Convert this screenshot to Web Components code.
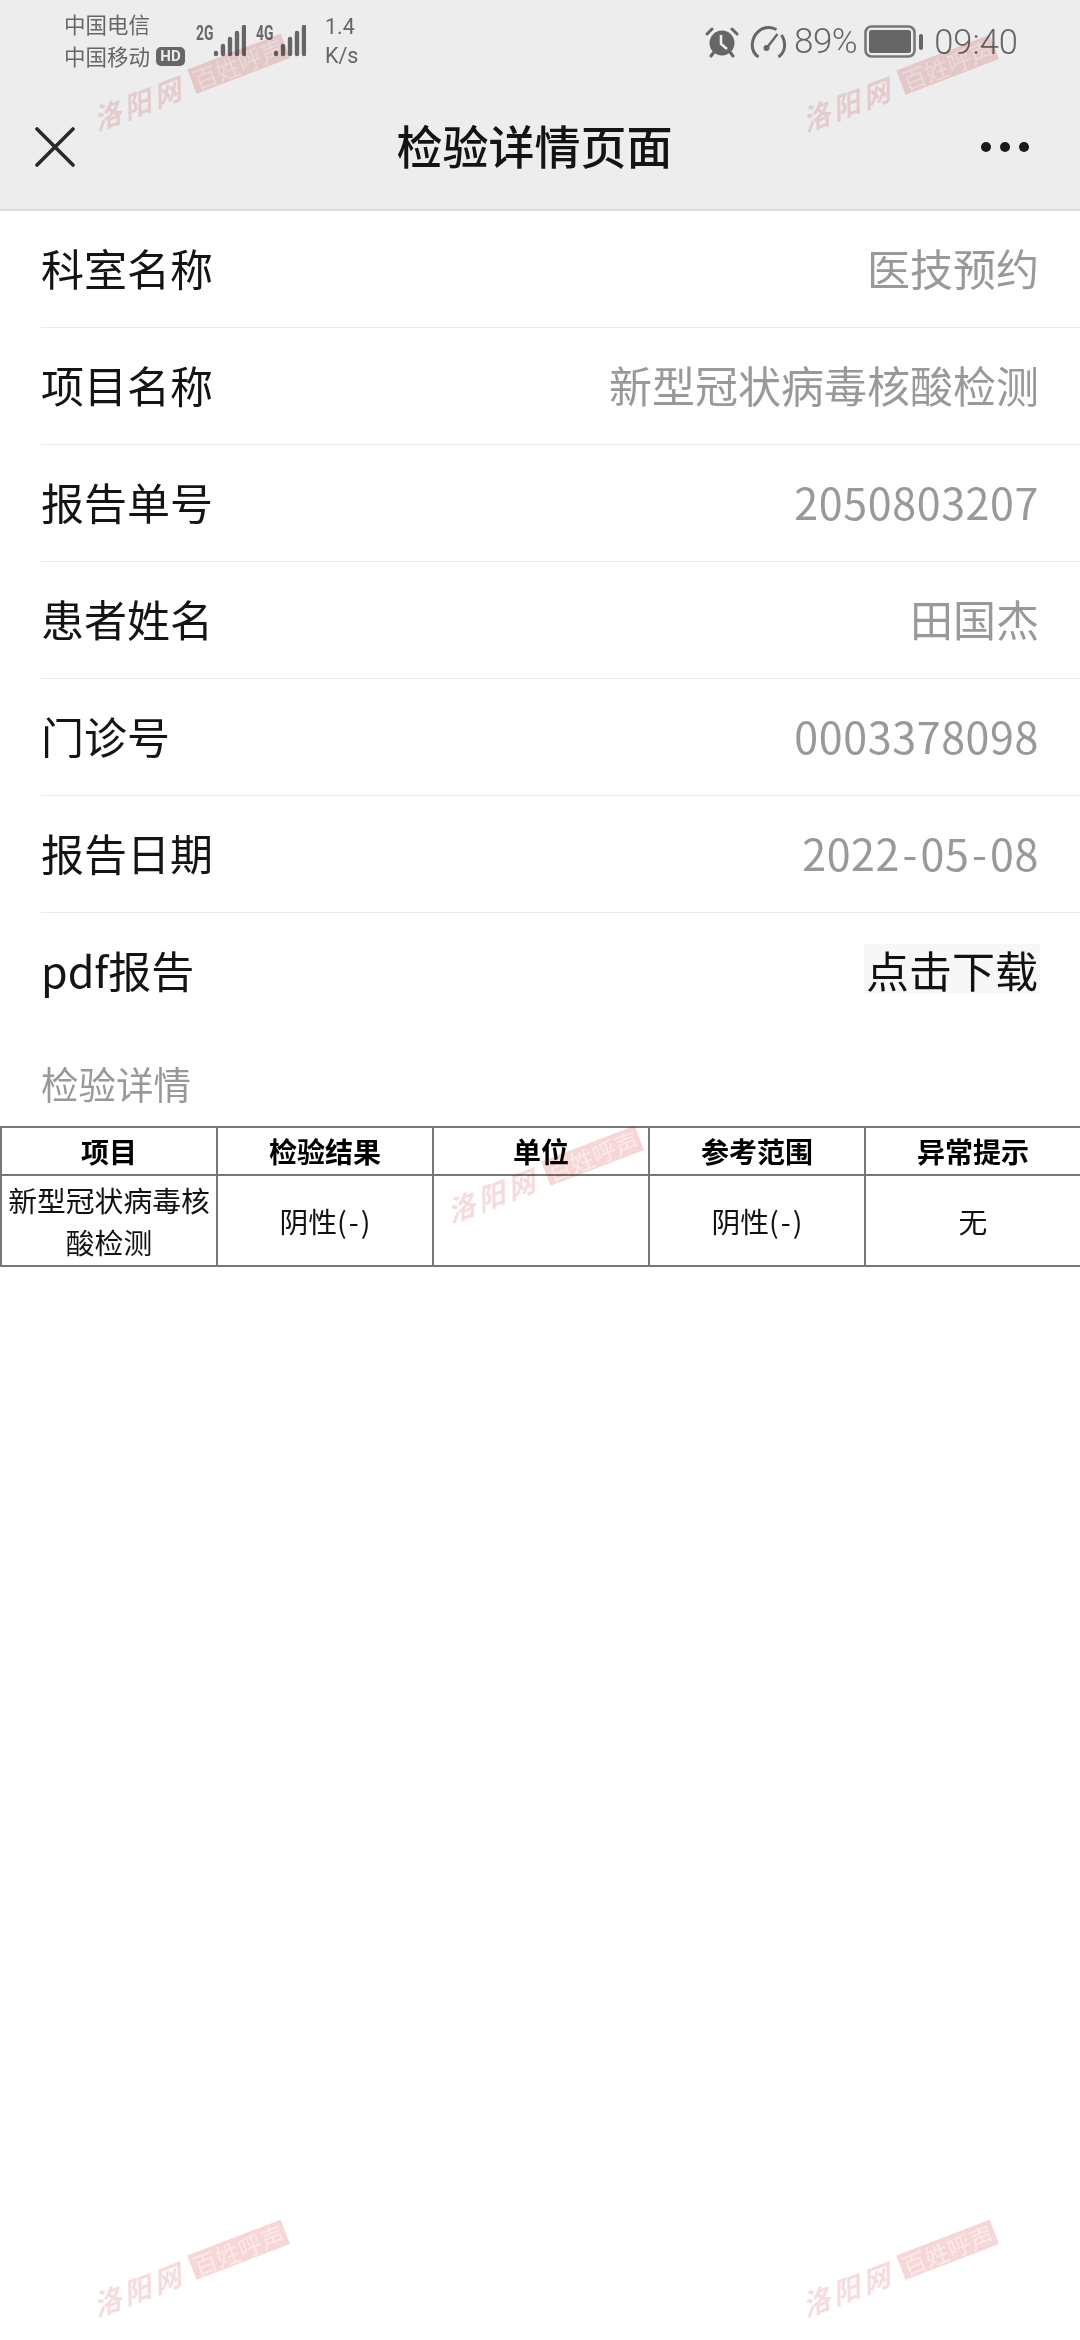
<!DOCTYPE html>
<html lang="zh-CN">
<head>
<meta charset="utf-8">
<title>检验详情页面</title>
<style>
  html, body {
    margin: 0;
    background: #fff;
    font-family: "Noto Sans CJK SC", "Noto Sans", sans-serif;
  }
</style>
</head>
<body>
<report-page>
  <status-bar></status-bar>
  <nav-bar>检验详情页面</nav-bar>
  <info-row label="科室名称">医技预约</info-row>
  <info-row label="项目名称">新型冠状病毒核酸检测</info-row>
  <info-row label="报告单号" digits>2050803207</info-row>
  <info-row label="患者姓名">田国杰</info-row>
  <info-row label="门诊号" digits>0003378098</info-row>
  <info-row label="报告日期" digits>2022<span style="margin:0 2.500px">-</span>05<span style="margin:0 2.500px">-</span>08</info-row>
  <info-row label="pdf报告" link last>点击下载</info-row>
  <section-title>检验详情</section-title>
  <result-table></result-table>
  <water-mark x="191" y="82"></water-mark>
  <water-mark x="900" y="83"></water-mark>
  <water-mark x="545" y="1174"></water-mark>
  <water-mark x="191" y="2268"></water-mark>
  <water-mark x="900" y="2268"></water-mark>
</report-page>

<script>
class ReportPage extends HTMLElement {
  constructor() {
    super();
    this.attachShadow({ mode: "open" });
    this.shadowRoot.innerHTML = `
      <style>
        :host {
          display: block;
          position: relative;
          width: 1080px;
          height: 2340px;
          overflow: hidden;
          background: #fff;
        }
      </style>
      <slot></slot>
    `;
  }
}

class StatusBar extends HTMLElement {
  constructor() {
    super();
    this.attachShadow({ mode: "open" });

    // Signal bars, the first one is only a dot
    const bars = `
      <svg width="33" height="32" viewBox="0 0 33 32" fill="none" stroke="#666" stroke-width="4.4" stroke-linecap="round">
        <path d="M3 28v1M10 21v8M17 14v15M24 8v21M31 2v27"/>
      </svg>`;

    this.shadowRoot.innerHTML = `
      <style>
        :host {
          display: flex;
          align-items: flex-start;
          box-sizing: border-box;
          height: 84px;
          padding: 8px 0 0 64px;
          background: #ededed;
          color: #666;
          font-family: "Noto Sans CJK SC", sans-serif;
        }
        .carriers {
          display: flex;
          flex-direction: column;
          width: 132px;
          font-size: 21.500px;
          line-height: 32px;
        }
        .line {
          display: flex;
          align-items: center;
          gap: 6px;
          white-space: nowrap;
        }
        .hd {
          width: 29px;
          height: 19px;
          border-radius: 5px;
          background: #666;
          color: #ededed;
          font: 700 15px/19px "Roboto", sans-serif;
          text-align: center;
        }
        .signal {
          display: flex;
          align-items: flex-start;
          margin-top: 17px;
        }
        .signal + .signal { margin-left: 10px; }
        .net {
          display: inline-block;
          width: 18px;
          margin-top: -1px;
          font: 700 21px/19px "Roboto", sans-serif;
          transform: scaleX(.66);
          transform-origin: left top;
        }
        .signal svg { margin-left: -1px; }
        .speed {
          width: 50px;
          margin: 4px 0 0 19px;
          font: 21.500px/29px "Roboto", sans-serif;
        }
        .right {
          display: flex;
          align-items: center;
          height: 36px;
          margin: 16px 0 0 auto;
          padding-right: 62px;
        }
        .pct {
          margin: 0 7px 0 7px;
          font: 300 35px/36px "Roboto", sans-serif;
          letter-spacing: -.5px;
        }
        .time {
          margin-left: 10px;
          font: 300 34.500px/36px "Roboto", sans-serif;
        }
        svg { display: block; flex: none; }
      </style>
      <div class="carriers">
        <div class="line">中国电信</div>
        <div class="line">中国移动<span class="hd">HD</span></div>
      </div>
      <div class="signal"><span class="net">2G</span>${bars}</div>
      <div class="signal"><span class="net">4G</span>${bars}</div>
      <div class="speed"><div>1.4</div><div>K/s</div></div>
      <div class="right">
        <svg width="34" height="34" viewBox="0 0 34 34">
          <circle cx="17" cy="18" r="12.5" fill="#666"/>
          <path d="M2 9l5-5M32 9l-5-5M6 31l3-4M28 31l-3-4" stroke="#666" stroke-width="3" stroke-linecap="round"/>
          <path d="M16 10v9l6 5" fill="none" stroke="#ededed" stroke-width="2.6"/>
        </svg>
        <svg width="37" height="34" viewBox="0 0 36 34" fill="none" stroke="#666" stroke-width="3" style="margin-left:11px">
          <path d="M8 32C2 28 1 21 2.500 15C5 7 12 2 19 2.500C22 2.700 24 3.500 26 4.500"/>
          <path d="M31 10C36 18 35 27 28 32"/>
          <path d="M17 22L27 9" stroke-width="2.400"/>
          <circle cx="16" cy="23" r="3" fill="#666" stroke="none"/>
        </svg>
        <span class="pct">89%</span>
        <svg width="60" height="34" viewBox="0 0 60 34">
          <rect x="1.500" y="1.500" width="49" height="30" rx="6" fill="none" stroke="#777" stroke-width="2.600"/>
          <rect x="5" y="5" width="42" height="23" rx="2.500" fill="#666"/>
          <rect x="55" y="9" width="4" height="16" rx="2" fill="#666"/>
        </svg>
        <span class="time">09:40</span>
      </div>
    `;
  }
}

class NavBar extends HTMLElement {
  constructor() {
    super();
    this.attachShadow({ mode: "open" });
    this.shadowRoot.innerHTML = `
      <style>
        :host {
          display: flex;
          align-items: center;
          justify-content: space-between;
          box-sizing: border-box;
          height: 127px;
          padding: 0 50px 0 35px;
          background: #ededed;
          border-bottom: 2px solid #dcdcdc;
        }
        .title {
          margin: 0 0 6px 14px;
          font-size: 46px;
          font-weight: 500;
          line-height: 60px;
          color: #141414;
        }
        svg { display: block; flex: none; }
      </style>
      <svg width="40" height="40" viewBox="0 0 40 40" fill="none" stroke="#2a2a2a" stroke-width="3.600" stroke-linecap="round">
        <path d="M2 2l36 36M38 2L2 38"/>
      </svg>
      <span class="title"><slot></slot></span>
      <svg width="50" height="12" viewBox="0 0 50 12" fill="#1a1a1a">
        <circle cx="6" cy="6" r="5"/><circle cx="25" cy="6" r="5"/><circle cx="44" cy="6" r="5"/>
      </svg>
    `;
  }
}

class InfoRow extends HTMLElement {
  constructor() {
    super();
    this.attachShadow({ mode: "open" });
    this.shadowRoot.innerHTML = `
      <style>
        :host {
          display: flex;
          align-items: center;
          justify-content: space-between;
          box-sizing: border-box;
          height: 117px;
          margin-left: 41px;
          padding: 0 41px 5px 0;
          border-bottom: 1px solid #eaeaea;
          font-size: 43px;
          color: #141414;
        }
        :host([last]) { border-bottom: 0; }
        .value { color: #999; }
        :host([digits]) .value { letter-spacing: .6px; }
        :host([link]) .value {
          padding: 0 2px;
          margin-right: -1px;
          background: #f7f7f7;
          color: #111;
          line-height: 50px;
        }
      </style>
      <span class="label">${this.label}</span>
      <span class="value"><slot></slot></span>
    `;
  }

  get label() {
    return this.getAttribute("label") || "";
  }
}

class SectionTitle extends HTMLElement {
  constructor() {
    super();
    this.attachShadow({ mode: "open" });
    this.shadowRoot.innerHTML = `
      <style>
        :host {
          display: flex;
          align-items: center;
          box-sizing: border-box;
          height: 96px;
          padding: 9px 0 0 41px;
          font-size: 37.500px;
          color: #999;
        }
      </style>
      <slot></slot>
    `;
  }
}

class ResultTable extends HTMLElement {
  constructor() {
    super();
    this.attachShadow({ mode: "open" });
    this.shadowRoot.innerHTML = `
      <style>
        :host { display: block; }
        table {
          width: 1080px;
          table-layout: fixed;
          border-collapse: collapse;
          font-size: 28.800px;
          color: #111;
        }
        th, td {
          border: 2px solid #777;
          padding: 0 5px;
          text-align: center;
          line-height: 42px;
        }
        th { height: 46px; font-size: 28px; font-weight: 700; color: #000; }
        td { height: 89px; }
        .first { padding: 0; }
        .dash { margin: 0 2px; }
      </style>
      <table>
        <colgroup><col style="width:216px"><col style="width:216px"><col style="width:216px"><col style="width:216px"><col style="width:216px"></colgroup>
        <tr><th>项目</th><th>检验结果</th><th>单位</th><th>参考范围</th><th>异常提示</th></tr>
        <tr><td class="first">新型冠状病毒核酸检测</td><td>阴性(<span class="dash">-</span>)</td><td></td><td>阴性(<span class="dash">-</span>)</td><td>无</td></tr>
      </table>
    `;
  }
}

class WaterMark extends HTMLElement {
  constructor() {
    super();
    this.attachShadow({ mode: "open" });
    this.shadowRoot.innerHTML = `
      <style>
        :host {
          position: absolute;
          left: ${this.getAttribute("x")}px;
          top: ${this.getAttribute("y")}px;
          display: flex;
          align-items: center;
          gap: 6px;
          transform: translate(-50%, -50%) rotate(-21deg);
          mix-blend-mode: multiply;
          white-space: nowrap;
        }
        .script {
          width: 96px;
          font-size: 28px;
          font-weight: 700;
          line-height: 30px;
          letter-spacing: 4px;
          color: #f6dcdc;
          transform: skewX(-20deg);
        }
        .band {
          width: 100px;
          height: 26px;
          background: #f6d6d6;
          color: #fbeaea;
          font: 400 24px/26px "Noto Sans CJK SC", serif;
          text-align: center;
        }
      </style>
      <span class="script">洛阳网</span>
      <span class="band">百姓呼声</span>
    `;
  }
}

customElements.define("report-page", ReportPage);
customElements.define("status-bar", StatusBar);
customElements.define("nav-bar", NavBar);
customElements.define("info-row", InfoRow);
customElements.define("section-title", SectionTitle);
customElements.define("result-table", ResultTable);
customElements.define("water-mark", WaterMark);
</script>
</body>
</html>
